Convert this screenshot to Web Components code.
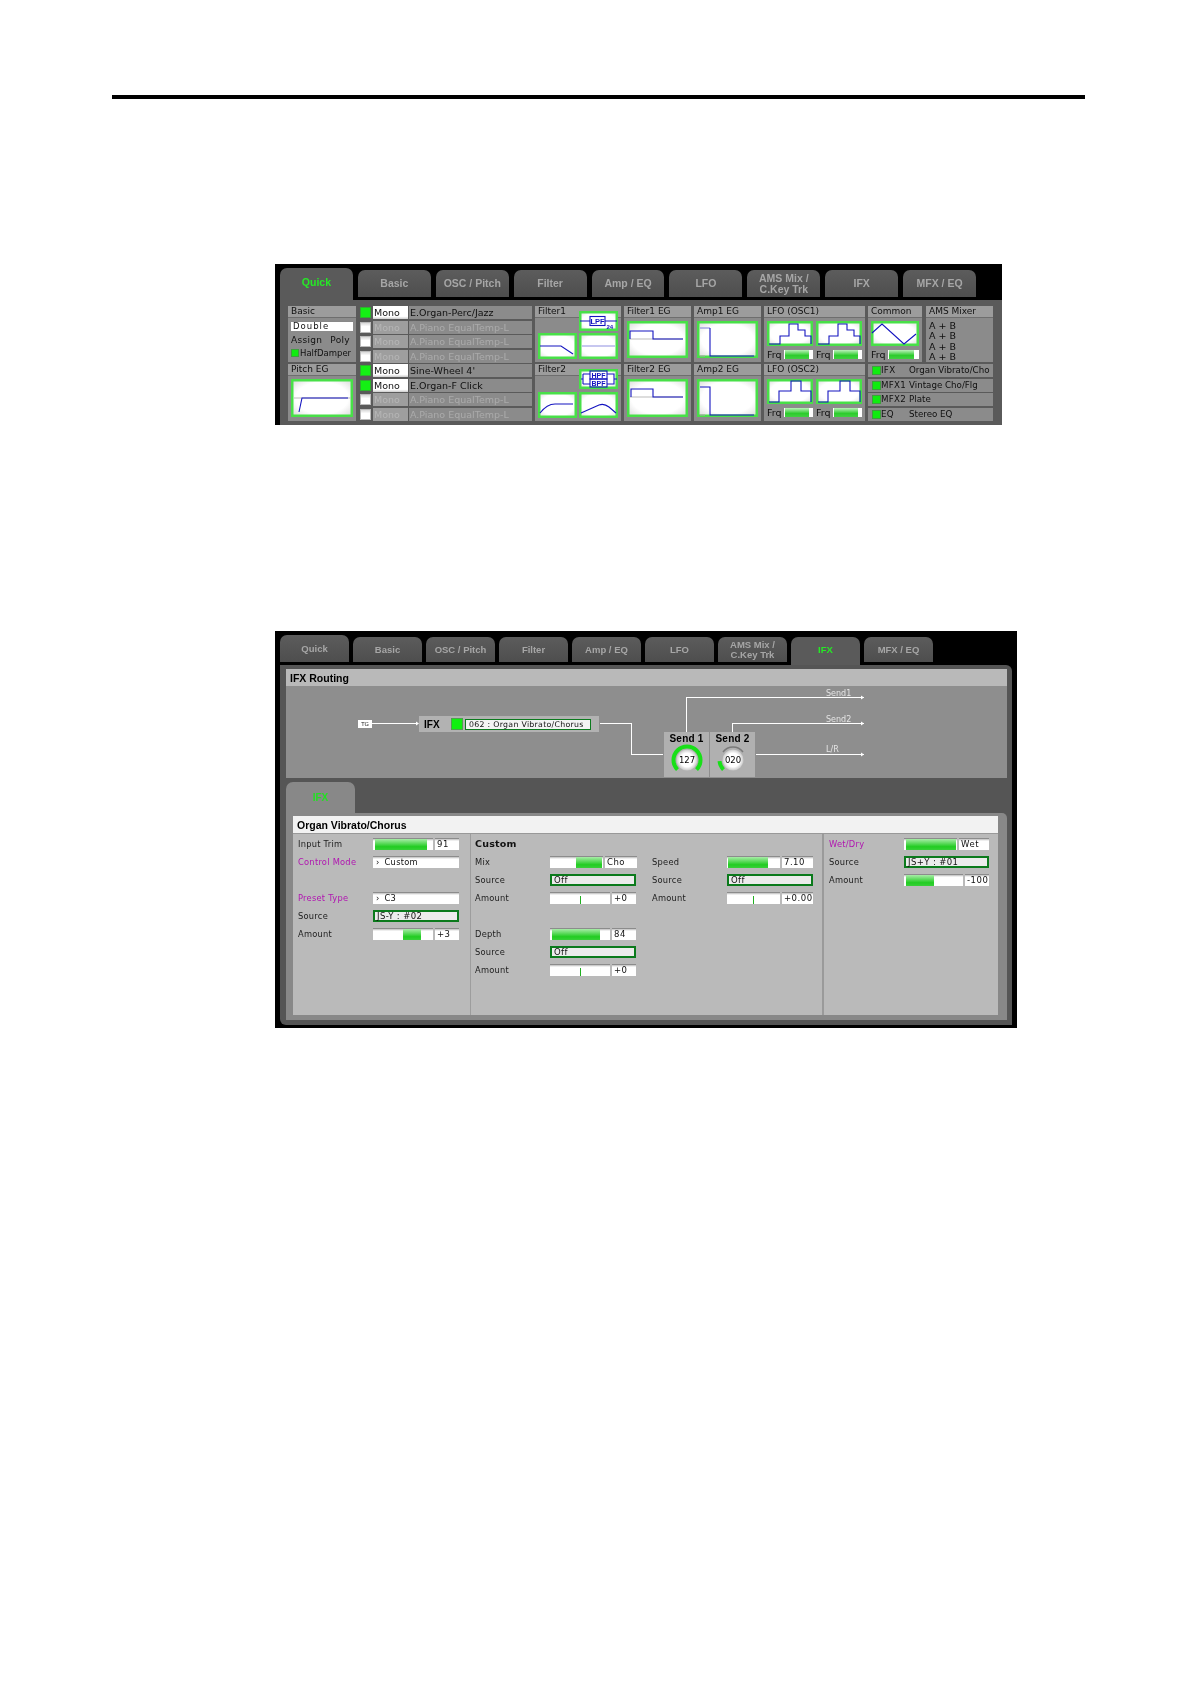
<!DOCTYPE html>
<html>
<head>
<meta charset="utf-8">
<title>Program edit screens</title>
<style>
  html, body { margin: 0; padding: 0; background: #fff; }
  body { font-family: "DejaVu Sans", sans-serif; width: 1190px; height: 1684px; overflow: hidden; }
</style>
</head>
<body>
<kb-rule></kb-rule>
<kb-window class="first" tab-w="72.9" tab-gap="5" tab-h="27" tab-size="10.5" style="--top:165px;--w:727px;--pb:0px">
  <kb-tab slot="tabs" active tall>Quick</kb-tab>
  <kb-tab slot="tabs">Basic</kb-tab>
  <kb-tab slot="tabs">OSC / Pitch</kb-tab>
  <kb-tab slot="tabs">Filter</kb-tab>
  <kb-tab slot="tabs">Amp / EQ</kb-tab>
  <kb-tab slot="tabs">LFO</kb-tab>
  <kb-tab slot="tabs">AMS Mix /<br>C.Key Trk</kb-tab>
  <kb-tab slot="tabs">IFX</kb-tab>
  <kb-tab slot="tabs">MFX / EQ</kb-tab>
  <kb-quick></kb-quick>
</kb-window>
<kb-window tab-w="69" tab-gap="4" tab-h="25" tab-size="9.5" style="--top:206px;--w:742px;--pb:3px">
  <kb-tab slot="tabs" tall>Quick</kb-tab>
  <kb-tab slot="tabs">Basic</kb-tab>
  <kb-tab slot="tabs">OSC / Pitch</kb-tab>
  <kb-tab slot="tabs">Filter</kb-tab>
  <kb-tab slot="tabs">Amp / EQ</kb-tab>
  <kb-tab slot="tabs">LFO</kb-tab>
  <kb-tab slot="tabs">AMS Mix /<br>C.Key Trk</kb-tab>
  <kb-tab slot="tabs" active>IFX</kb-tab>
  <kb-tab slot="tabs">MFX / EQ</kb-tab>
  <kb-ifx></kb-ifx>
</kb-window>

<script>
const BLUE = "#1414c0";

// line art of the little graph boxes, coordinates are px inside the box
const GRAPHS = {
  pitch: `<path d="M3 19H60" stroke="#bbb" stroke-width="1"/><path d="M8 33L11 19H57" stroke="${BLUE}"/>`,
  feg1: `<path d="M3 18H56" stroke="#bbb" stroke-width="1"/><path d="M3 18V10H26V18H56" stroke="${BLUE}"/>`,
  feg2: `<path d="M3 18H56" stroke="#bbb" stroke-width="1"/><path d="M4 18V10H26V18H56" stroke="${BLUE}"/>`,
  amp1: `<path d="M3 7H13" stroke="#8888dd"/><path d="M3 35H8" stroke="#aaa"/><path d="M13 7V35H57" stroke="${BLUE}"/>`,
  amp2: `<path d="M3 36H8" stroke="#aaa"/><path d="M3 8H13V36H57" stroke="${BLUE}"/>`,
  lpcurve: `<path d="M2 13H23L35 21" stroke="${BLUE}"/>`,
  flat: `<path d="M3 13H36" stroke="#8f8fe0" stroke-width="1"/>`,
  hpcurve: `<path d="M2 21Q9 12 17 12H35" stroke="${BLUE}"/>`,
  bpcurve: `<path d="M2 21L20 13Q25 11 30 15L37 21" stroke="${BLUE}"/>`,
  lfo1: `<path d="M2 23H13V15H22V3H31V9H38V15H44V23" stroke="${BLUE}"/>`,
  lfo2: `<path d="M2 23H12V12H24V2H34V12H44V23" stroke="${BLUE}"/>`,
  tri: `<path d="M1 12L11 3L33 23L45 13" stroke="${BLUE}"/>`,
  lpf: `<path d="M1 10H11M26 10H38" stroke="${BLUE}"/><rect x="11" y="5.5" width="15" height="9" stroke="${BLUE}"/>
        <text x="18.5" y="12.6" text-anchor="middle" font-size="7.5" font-weight="700" font-family="Liberation Sans" fill="${BLUE}" stroke="none">LPF</text>
        <text x="27.5" y="17.5" font-size="6" font-weight="700" font-family="Liberation Sans" fill="${BLUE}" stroke="none">24</text>`,
  hbpf: `<path d="M2 10H4M4 5V15M4 5H11M4 15H11M28 5H35V15H28M35 10H38" stroke="${BLUE}"/>
        <rect x="11" y="2" width="17" height="8" stroke="${BLUE}"/><rect x="11" y="10" width="17" height="8" stroke="${BLUE}"/>
        <text x="19.5" y="8.7" text-anchor="middle" font-size="7" font-weight="700" font-family="Liberation Sans" fill="${BLUE}" stroke="none">HPF</text>
        <text x="19.5" y="16.7" text-anchor="middle" font-size="7" font-weight="700" font-family="Liberation Sans" fill="${BLUE}" stroke="none">BPF</text>`
};

class KbRule extends HTMLElement {
  constructor() {
    super();
    this.attachShadow({ mode: "open" });
    this.shadowRoot.innerHTML = `<style>
      :host { display: block; margin: 95px 0 0 112px; width: 973px; height: 4px; background: #000; }
    </style>`;
  }
}

class KbWindow extends HTMLElement {
  constructor() {
    super();
    this.attachShadow({ mode: "open" });
    this.shadowRoot.innerHTML = `<style>
      :host { display: block; margin: var(--top) 0 0 275px; width: var(--w); background: #000; padding: 4px 0 var(--pb) 5px; box-sizing: border-box; filter: blur(.25px); }
      .tabs { display: flex; align-items: flex-end; padding-bottom: 3px; }
    </style>
    <div class="tabs"><slot name="tabs"></slot></div>
    <slot></slot>`;
  }
  connectedCallback() {
    const tabs = this.shadowRoot.querySelector(".tabs");
    tabs.style.gap = this.getAttribute("tab-gap") + "px";
    this.style.setProperty("--tab-w", this.getAttribute("tab-w") + "px");
    this.style.setProperty("--tab-h", this.getAttribute("tab-h") + "px");
    this.style.setProperty("--tab-size", this.getAttribute("tab-size") + "px");
  }
}

class KbTab extends HTMLElement {
  constructor() {
    super();
    this.attachShadow({ mode: "open" });
    this.shadowRoot.innerHTML = `<style>
      :host { display: flex; align-items: center; justify-content: center; box-sizing: border-box; width: var(--tab-w); height: var(--tab-h); padding-top: 1px;
        border-radius: 7px 7px 0 0; background: linear-gradient(#5c5c5c, #4e4e4e); color: #a6a6a6; text-align: center;
        font: 700 var(--tab-size)/1.08 "Liberation Sans", sans-serif; }
      :host([tall]) { height: calc(var(--tab-h) + 2px); }
      :host([active]) { height: calc(var(--tab-h) + 3px); margin-bottom: -3px; padding-bottom: 3px; background: #5a5a5a; color: #26e826; position: relative; }
      :host([active][tall]) { height: calc(var(--tab-h) + 5px); }
    </style><slot></slot>`;
  }
}

class KbCell extends HTMLElement {
  constructor() {
    super();
    this.attachShadow({ mode: "open" });
    this.shadowRoot.innerHTML = `<style>
      :host { display: flex; flex-direction: column; background: #8b8b8b; min-width: 0; }
      .head { flex: none; height: 11px; line-height: 11px; padding-left: 3px; background: #9c9c9c; border-bottom: 1px solid #6e6e6e; font-size: 9px; color: #101010; white-space: nowrap; }
      .body { flex: 1; min-height: 0; display: flex; flex-direction: column; padding: 3px 3px 4px; }
      :host([flush]) .body { padding: 0 3px 3px; }
    </style>
    <div class="head"></div>
    <div class="body"><slot></slot></div>`;
  }
  connectedCallback() {
    this.shadowRoot.querySelector(".head").textContent = this.getAttribute("label");
  }
}

class KbGraph extends HTMLElement {
  constructor() {
    super();
    this.attachShadow({ mode: "open" });
  }
  connectedCallback() {
    this.shadowRoot.innerHTML = `<style>
      :host { display: block; background: radial-gradient(ellipse at center, #fff 60%, #d4d4d4 100%); box-shadow: inset 0 0 0 2.5px #48e048; min-height: 0; flex: 1; }
      svg { display: block; width: 100%; height: 100%; fill: none; stroke-width: 1.1; }
    </style><svg>${GRAPHS[this.getAttribute("kind")]}</svg>`;
  }
}

class KbFrq extends HTMLElement {
  constructor() {
    super();
    this.attachShadow({ mode: "open" });
    this.shadowRoot.innerHTML = `<style>
      :host { display: flex; align-items: center; gap: 2px; flex: none; height: 10px; margin-top: 3px; font-size: 9.5px; color: #101010; }
      .bar { flex: 1; height: 10px; background: linear-gradient(#8c8c8c 1px, #fff 1px); position: relative; }
      .bar i { display: block; position: absolute; left: 1px; top: 1px; bottom: 0; width: 82%; background: linear-gradient(#bdf0bd, #2ccc2c 60%, #42d042); }
    </style><span>Frq</span><div class="bar"><i></i></div>`;
  }
}

class KbTimbre extends HTMLElement {
  constructor() {
    super();
    this.attachShadow({ mode: "open" });
  }
  connectedCallback() {
    this.shadowRoot.innerHTML = `<style>
      :host { display: flex; height: 13px; line-height: 13px; font-size: 9.5px; color: #101010; white-space: nowrap; }
      .led { flex: none; width: 11px; height: 11px; margin: 1px 2px 0 1px; background: linear-gradient(#ccc, #fff 40%); box-shadow: inset 0 0 0 1px #bbb; }
      .mono { flex: none; width: 35px; padding-left: 1px; box-sizing: border-box; background: linear-gradient(#fff, #fff 80%, #ccc); }
      .name { flex: 1; margin-left: 1px; padding-left: 1px; background: #8b8b8b; }
      :host([on]) .led { background: #14f014; box-shadow: inset 0 0 0 1px #2fb02f; }
      :host(:not([on])) .mono { background: #9e9e9e; color: #b6b6b6; }
      :host(:not([on])) .name { color: #ababab; }
    </style>
    <div class="led"></div><div class="mono">Mono</div><div class="name">${this.getAttribute("name")}</div>`;
  }
}

class KbFxRow extends HTMLElement {
  constructor() {
    super();
    this.attachShadow({ mode: "open" });
  }
  connectedCallback() {
    this.shadowRoot.innerHTML = `<style>
      :host { display: flex; height: 13px; line-height: 13px; font-size: 8.7px; color: #101010; background: #8b8b8b; white-space: nowrap; padding-left: 4px; }
      .led { flex: none; width: 9px; height: 9px; margin: 2px 0 0 0; background: #10ec10; box-shadow: inset 0 0 0 1px #3d9f3d; }
      .tag { flex: none; width: 28px; letter-spacing: .3px; }
    </style><div class="led"></div><div class="tag">${this.getAttribute("tag")}</div><div>${this.getAttribute("name")}</div>`;
  }
}

const quickTemplate = document.createElement("template");
quickTemplate.innerHTML = `
  <style>
    :host { display: block; background: #5a5a5a; padding: 6px 9px 4px 8px; position: relative; }
    .grid { display: grid; grid-template-columns: 68px 173px 86px 67px 67px 101px 125px; grid-template-rows: 56px 57px; gap: 2px 3px; }
    .list { grid-column: 2; grid-row: 1 / 3; display: flex; flex-direction: column; justify-content: space-between; }
    .pair { display: flex; gap: 4px; }
    .pair kb-cell:first-child { width: 54px; }
    .pair kb-cell:last-child { flex: 1; }
    .fx { display: flex; flex-direction: column; justify-content: space-between; }
    .double { height: 10px; line-height: 10px; margin: 0 0 3px; padding-left: 2px; background: linear-gradient(#888 1px, #fff 1px); font-size: 8.5px; letter-spacing: 1px; color: #111; }
    .assign { display: flex; justify-content: space-between; height: 13px; line-height: 13px; font-size: 9px; padding-right: 3px; letter-spacing: .3px; color: #111; }
    .damper { display: flex; height: 12px; line-height: 12px; font-size: 8.5px; color: #111; white-space: nowrap; }
    .damper i { flex: none; width: 8px; height: 8px; margin: 2px 1px 0 0; background: #10ec10; box-shadow: inset 0 0 0 1px #3d9f3d; }
    .filter { display: grid; grid-template-columns: 39px 39px; gap: 2px; }
    .filter .box { grid-column: 2; margin-top: -7px; height: 20px; }
    .filter .curve { height: 26px; }
    .filter.low { row-gap: 3px; }
    .lfo { display: grid; grid-template-columns: 1fr 1fr; column-gap: 3px; }
    .lfo kb-graph { height: 25px; flex: none; }
    .col { display: flex; flex-direction: column; min-width: 0; }
    .common kb-graph { height: 25px; flex: none; }
    .ams { font-size: 9.5px; line-height: 10.4px; color: #111; white-space: nowrap; }
  </style>
  <div class="grid">
    <kb-cell label="Basic">
      <div class="double">Double</div>
      <div class="assign"><span>Assign</span><span>Poly</span></div>
      <div class="damper"><i></i>HalfDamper</div>
    </kb-cell>
    <div class="list">
      <kb-timbre on name="E.Organ-Perc/Jazz"></kb-timbre>
      <kb-timbre name="A.Piano EqualTemp-L"></kb-timbre>
      <kb-timbre name="A.Piano EqualTemp-L"></kb-timbre>
      <kb-timbre name="A.Piano EqualTemp-L"></kb-timbre>
      <kb-timbre on name="Sine-Wheel 4'"></kb-timbre>
      <kb-timbre on name="E.Organ-F Click"></kb-timbre>
      <kb-timbre name="A.Piano EqualTemp-L"></kb-timbre>
      <kb-timbre name="A.Piano EqualTemp-L"></kb-timbre>
    </div>
    <kb-cell label="Filter1" flush>
      <div class="filter">
        <kb-graph class="box" kind="lpf"></kb-graph>
        <kb-graph class="curve" kind="lpcurve"></kb-graph>
        <kb-graph class="curve" kind="flat"></kb-graph>
      </div>
    </kb-cell>
    <kb-cell label="Filter1 EG"><kb-graph kind="feg1"></kb-graph></kb-cell>
    <kb-cell label="Amp1 EG"><kb-graph kind="amp1"></kb-graph></kb-cell>
    <kb-cell label="LFO (OSC1)">
      <div class="lfo">
        <div class="col"><kb-graph kind="lfo1"></kb-graph><kb-frq></kb-frq></div>
        <div class="col"><kb-graph kind="lfo1"></kb-graph><kb-frq></kb-frq></div>
      </div>
    </kb-cell>
    <div class="pair">
      <kb-cell label="Common" class="common"><div class="col common"><kb-graph kind="tri"></kb-graph><kb-frq></kb-frq></div></kb-cell>
      <kb-cell label="AMS Mixer"><div class="ams">A + B<br>A + B<br>A + B<br>A + B</div></kb-cell>
    </div>
    <kb-cell label="Pitch EG"><kb-graph kind="pitch"></kb-graph></kb-cell>
    <kb-cell label="Filter2" flush>
      <div class="filter low">
        <kb-graph class="box" kind="hbpf"></kb-graph>
        <kb-graph class="curve" kind="hpcurve"></kb-graph>
        <kb-graph class="curve" kind="bpcurve"></kb-graph>
      </div>
    </kb-cell>
    <kb-cell label="Filter2 EG"><kb-graph kind="feg2"></kb-graph></kb-cell>
    <kb-cell label="Amp2 EG"><kb-graph kind="amp2"></kb-graph></kb-cell>
    <kb-cell label="LFO (OSC2)">
      <div class="lfo">
        <div class="col"><kb-graph kind="lfo2"></kb-graph><kb-frq></kb-frq></div>
        <div class="col"><kb-graph kind="lfo2"></kb-graph><kb-frq></kb-frq></div>
      </div>
    </kb-cell>
    <div class="fx">
      <kb-fx-row tag="IFX" name="Organ Vibrato/Cho"></kb-fx-row>
      <kb-fx-row tag="MFX1" name="Vintage Cho/Flg"></kb-fx-row>
      <kb-fx-row tag="MFX2" name="Plate"></kb-fx-row>
      <kb-fx-row tag="EQ" name="Stereo EQ"></kb-fx-row>
    </div>
  </div>`;

class KbQuick extends HTMLElement {
  constructor() {
    super();
    this.attachShadow({ mode: "open" });
    this.shadowRoot.appendChild(quickTemplate.content.cloneNode(true));
  }
}

class KbKnob extends HTMLElement {
  constructor() {
    super();
    this.attachShadow({ mode: "open" });
  }
  connectedCallback() {
    const full = this.hasAttribute("full");
    const arc = full ? "M7.45 26.55A13.5 13.5 0 1 1 26.55 26.55" : "M7.45 26.55A13.5 13.5 0 0 1 3.55 18.18";
    this.shadowRoot.innerHTML = `<style>
      :host { display: block; width: 34px; height: 34px; }
      svg { display: block; }
      text { font: 8.5px "DejaVu Sans", sans-serif; fill: #000; }
    </style>
    <svg width="34" height="34">
      <defs><radialGradient id="disk"><stop offset="65%" stop-color="#fff"/><stop offset="100%" stop-color="#c8c8c8"/></radialGradient></defs>
      <path d="${arc}" fill="none" stroke="#18e018" stroke-width="4"/>
      ${full ? "" : '<path d="M7 9A12.5 12.5 0 0 1 27 9" fill="none" stroke="#7a7a7a" stroke-width="1.5"/>'}
      <circle cx="17" cy="17" r="10.5" fill="url(#disk)"/>
      <text x="17" y="20" text-anchor="middle">${this.getAttribute("value")}</text>
    </svg>`;
  }
}

const routingTemplate = document.createElement("template");
routingTemplate.innerHTML = `
  <style>
    :host { display: block; position: relative; height: 92px; background: #8e8e8e; }
    svg { position: absolute; inset: 0; width: 100%; height: 100%; fill: #fff; stroke: none; }
    .tg { position: absolute; left: 72px; top: 34px; width: 14px; height: 8px; line-height: 8px; background: #fff; color: #222; font-size: 5.5px; text-align: center; }
    .ifx { position: absolute; left: 133px; top: 30px; width: 180px; height: 16px; background: #b2b2b2; display: flex; align-items: center; }
    .ifx b { font: 700 10px "Liberation Sans", sans-serif; color: #000; margin-left: 5px; width: 28px; }
    .ifx i { flex: none; width: 10px; height: 10px; background: #10f010; box-shadow: 0 0 0 1px #4f9f4f; }
    .ifx span { margin-left: 3px; width: 121px; height: 9px; line-height: 9px; padding-left: 3px; background: #f4f4f4; border: 1.5px solid #0c7a1e; font-size: 7.8px; letter-spacing: .3px; color: #111; white-space: nowrap; }
    .send { position: absolute; top: 46px; width: 45px; height: 45px; background: #b0b0b0; text-align: center; }
    .send b { display: block; font: 700 10px/12px "Liberation Sans", sans-serif; letter-spacing: .2px; color: #000; margin-top: 1px; }
    .send kb-knob { margin: -2px auto 0; }
    .label { position: absolute; left: 540px; font-size: 8px; color: #e4e4e4; line-height: 9px; }
  </style>
  <svg>
    <rect x="86" y="37" width="44" height="1"/><path d="M130 35.5L133 37.5L130 39.5Z"/>
    <path d="M314 37h32v31h31v1h-32v-31h-31z"/>
    <rect x="470" y="68" width="108" height="1"/><path d="M575 66.5L578 68.5L575 70.5Z"/>
    <path d="M400 46V11H578v1H401V46z"/><path d="M575 9.5L578 11.5L575 13.5Z"/>
    <path d="M446 46V37H578v1H447V46z"/><path d="M575 35.5L578 37.5L575 39.5Z"/>
  </svg>
  <div class="tg">TG</div>
  <div class="ifx"><b>IFX</b><i></i><span>062 : Organ Vibrato/Chorus</span></div>
  <div class="send" style="left:378px"><b>Send 1</b><kb-knob full value="127"></kb-knob></div>
  <div class="send" style="left:424px"><b>Send 2</b><kb-knob value="020"></kb-knob></div>
  <div class="label" style="top:3px">Send1</div>
  <div class="label" style="top:29px">Send2</div>
  <div class="label" style="top:59px">L/R</div>`;

class KbRouting extends HTMLElement {
  constructor() {
    super();
    this.attachShadow({ mode: "open" });
    this.shadowRoot.appendChild(routingTemplate.content.cloneNode(true));
  }
}

// one row of the effect page: label plus slider, arrow field or green source field
class KbParam extends HTMLElement {
  constructor() {
    super();
    this.attachShadow({ mode: "open" });
  }
  connectedCallback() {
    const a = n => this.getAttribute(n);
    let control = "";
    if (a("select") !== null) {
      control = `<div class="field"><span class="arrow">›</span>${a("select")}</div>`;
    } else if (a("source") !== null) {
      control = `<div class="source">${a("source")}</div>`;
    } else {
      const fill = a("from") !== null ? `<i style="left:${a("from")}px;width:${a("to") - a("from")}px"></i>` : "";
      const tick = a("tick") !== null ? `<u style="left:${a("tick")}px"></u>` : "";
      control = `<div class="bar" style="width:${a("w")}px">${fill}${tick}</div><div class="value">${a("value")}</div>`;
    }
    this.shadowRoot.innerHTML = `<style>
      :host { display: flex; height: 12px; line-height: 12px; font-size: 8.3px; letter-spacing: .25px; color: #1c1c1c; white-space: nowrap; }
      :host([skip]) { margin-top: 18px; }
      .label { flex: none; width: 75px; }
      :host([accent]) .label { color: #b014b0; }
      .ctl { flex: none; width: var(--ctl, 86px); display: flex; gap: 2px; }
      .bar, .field, .value { background: linear-gradient(#8c8c8c 1px, #bbb 1px, #fff 3px); position: relative; box-sizing: border-box; color: #111; }
      .bar i { position: absolute; top: 1px; bottom: 0; background: linear-gradient(#a8eca8, #22cc22 70%, #38d038); }
      .bar u { position: absolute; top: 4px; bottom: 0; width: 1px; background: #20b020; }
      .value { flex: 1; padding-left: 2px; font-size: 8.5px; letter-spacing: .5px; }
      .field { flex: 1; padding-left: 3px; font-size: 8.3px; }
      .arrow { margin-right: 5px; }
      .source { flex: 1; box-sizing: border-box; line-height: 8px; padding-left: 2px; background: #ececec; border: 2px solid #0b7a1c; color: #111; font-size: 8.5px; letter-spacing: .4px; }
    </style><div class="label">${a("label") || ""}</div><div class="ctl">${control}</div>`;
  }
}

const ifxTemplate = document.createElement("template");
ifxTemplate.innerHTML = `
  <style>
    :host { display: block; width: 732px; background: #555; padding: 4px 5px 5px 6px; box-sizing: border-box; border-radius: 0 6px 0 6px; }
    .bar { height: 17px; background: #b9b9b9; padding-left: 4px; font: 700 10.5px/18px "Liberation Sans", sans-serif; color: #000; }
    .subtab { width: 69px; height: 31px; margin-top: 4px; border-radius: 7px 7px 0 0; background: #888; display: flex; align-items: center; justify-content: center; color: #22e022; font: 700 10px "Liberation Sans", sans-serif; }
    .frame { background: #888; padding: 3px 9px 5px 7px; border-radius: 0 5px 0 0; }
    .title { height: 18px; box-sizing: border-box; background: #f2f2f2; border-bottom: 1px solid #999; padding-left: 4px; font: 700 10.5px/18px "Liberation Sans", sans-serif; color: #000; }
    .cols { display: grid; grid-template-columns: 177px 354px 1fr; height: 181px; background: #bababa; }
    .col { display: flex; flex-direction: column; gap: 6px; padding: 4px 0 0 5px; box-sizing: border-box; }
    .col.mid { flex-direction: row; gap: 0; padding-left: 4px; border-left: 1px solid #9d9d9d; border-right: 2px solid #9a9a9a; }
    .col.last { --ctl: 85px; }
    .sub { flex: none; width: 177px; display: flex; flex-direction: column; gap: 6px; }
    h4 { margin: 0; height: 12px; font: 700 9.5px/12px "DejaVu Sans", sans-serif; letter-spacing: .2px; color: #111; }
  </style>
  <div class="bar">IFX Routing</div>
  <kb-routing></kb-routing>
  <div class="subtab">IFX</div>
  <div class="frame">
    <div class="title">Organ Vibrato/Chorus</div>
    <div class="cols">
      <div class="col">
        <kb-param label="Input Trim" w="60" from="2" to="54" value="91"></kb-param>
        <kb-param label="Control Mode" accent select="Custom"></kb-param>
        <kb-param label="Preset Type" accent skip select="C3"></kb-param>
        <kb-param label="Source" source="JS-Y : #02"></kb-param>
        <kb-param label="Amount" w="60" from="30" to="48" value="+3"></kb-param>
      </div>
      <div class="col mid">
        <div class="sub">
          <h4>Custom</h4>
          <kb-param label="Mix" w="53" from="26" to="52" value="Cho" style="--ctl:87px"></kb-param>
          <kb-param label="Source" source="Off"></kb-param>
          <kb-param label="Amount" w="60" tick="30" value="+0"></kb-param>
          <kb-param label="Depth" skip w="60" from="2" to="50" value="84"></kb-param>
          <kb-param label="Source" source="Off"></kb-param>
          <kb-param label="Amount" w="60" tick="30" value="+0"></kb-param>
        </div>
        <div class="sub">
          <kb-param label="Speed" style="margin-top:18px" w="53" from="1" to="41" value="7.10"></kb-param>
          <kb-param label="Source" source="Off"></kb-param>
          <kb-param label="Amount" w="53" tick="26" value="+0.00"></kb-param>
        </div>
      </div>
      <div class="col last">
        <kb-param label="Wet/Dry" accent w="53" from="2" to="52" value="Wet"></kb-param>
        <kb-param label="Source" source="JS+Y : #01"></kb-param>
        <kb-param label="Amount" w="59" from="2" to="30" value="-100"></kb-param>
      </div>
    </div>
  </div>`;

class KbIfx extends HTMLElement {
  constructor() {
    super();
    this.attachShadow({ mode: "open" });
    this.shadowRoot.appendChild(ifxTemplate.content.cloneNode(true));
  }
}

customElements.define("kb-rule", KbRule);
customElements.define("kb-window", KbWindow);
customElements.define("kb-tab", KbTab);
customElements.define("kb-cell", KbCell);
customElements.define("kb-graph", KbGraph);
customElements.define("kb-frq", KbFrq);
customElements.define("kb-timbre", KbTimbre);
customElements.define("kb-fx-row", KbFxRow);
customElements.define("kb-quick", KbQuick);
customElements.define("kb-knob", KbKnob);
customElements.define("kb-routing", KbRouting);
customElements.define("kb-param", KbParam);
customElements.define("kb-ifx", KbIfx);
</script>
</body>
</html>
